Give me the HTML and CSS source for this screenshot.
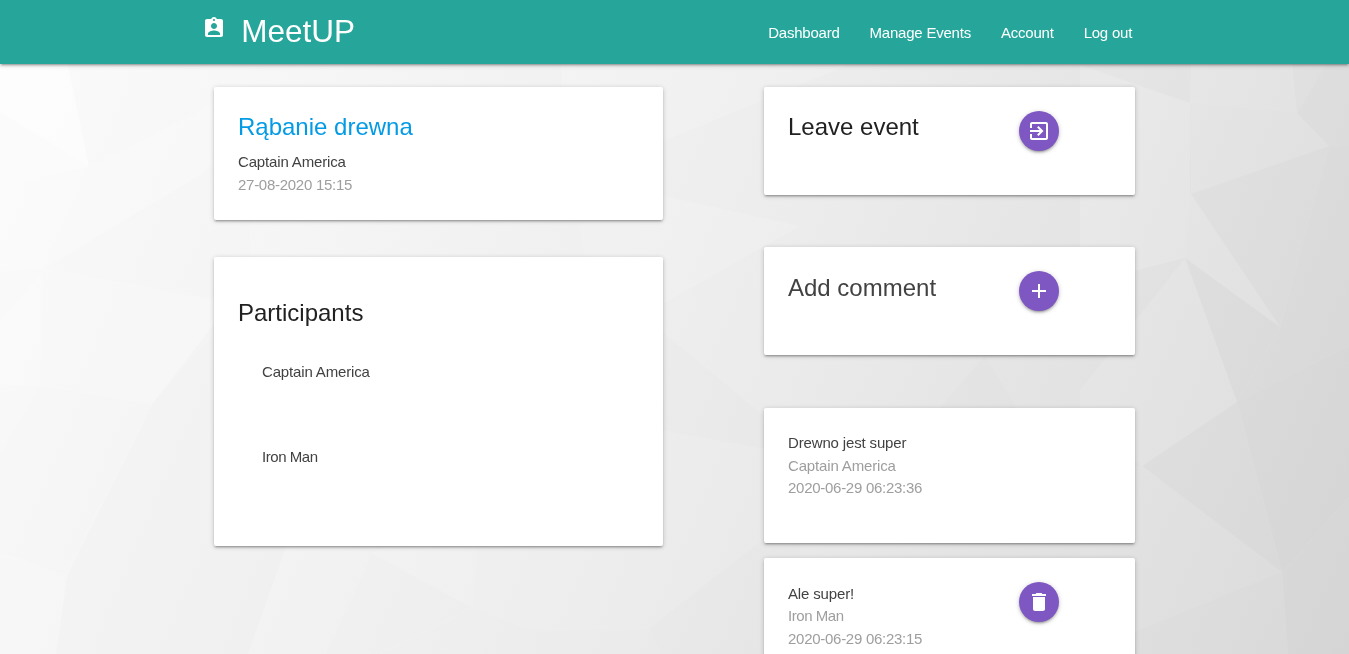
FILE: index.html
```html
<!DOCTYPE html>
<html lang="en">
<head>
<meta charset="utf-8">
<title>MeetUP</title>
<link rel="stylesheet" href="styles.css">
</head>
<body>
<svg class="backdrop" viewBox="0 0 1349 654" preserveAspectRatio="none" aria-hidden="true">
  <g fill="#fff">
    <path opacity=".5" d="M0 60H67L89 167L0 112Z"/>
    <path opacity=".3" d="M0 112L89 167L0 186Z"/>
    <path opacity=".2" d="M0 186L89 167L43 269L0 272Z"/>
    <path opacity=".14" d="M89 167L240 90L214 167L43 269Z"/>
    <path opacity=".15" d="M0 320L43 270L40 386H0Z"/>
    <path opacity=".1" d="M43 269L240 305L152 404Z"/>
    <path opacity=".1" d="M43 269L152 404L40 386Z"/>
    <path opacity=".15" d="M560 60H860L570 180Z"/>
    <path opacity=".12" d="M570 175L800 226L600 340Z"/>
    <path opacity=".15" d="M1080 65L1190 103V194L1080 180Z"/>
    <path opacity=".12" d="M1191 60H1292L1297 113L1190 103Z"/>
    <path opacity=".08" d="M1190 103L1297 113L1191 194Z"/>
    <path opacity=".08" d="M1297 113L1329 146L1191 194Z"/>
    <path opacity=".15" d="M1080 180L1191 194L1185 258L1080 285Z"/>
    <path opacity=".1" d="M1191 194L1280 327L1185 258Z"/>
    <path opacity=".1" d="M1080 390L1185 258L1237 402L1142 466L1080 430Z"/>
    <path opacity=".08" d="M1142 466L1282 572L1080 654V466Z"/>
    <path opacity=".1" d="M372 553L480 500L473 608Z"/>
  </g>
  <g fill="#000">
    <path opacity=".004" d="M43 269L200 174L250 120V306Z"/>
    <path opacity=".005" d="M40 386L152 404L65 576L0 552V452Z"/>
    <path opacity=".01" d="M152 404L240 290L310 480L248 654H56L67 575Z"/>
    <path opacity=".004" d="M372 553L473 608L380 654H325Z"/>
    <path opacity=".005" d="M473 608L535 631L650 629L690 654H380Z"/>
    <path opacity=".008" d="M649 628L800 510V654H660Z"/>
    <path opacity=".006" d="M600 280L800 445V455L600 420Z"/>
    <path opacity=".008" d="M985 355L1030 430H920Z"/>
    <path opacity=".008" d="M1191 194L1329 146L1280 327Z"/>
    <path opacity=".01" d="M1185 258L1280 327L1237 402Z"/>
    <path opacity=".012" d="M1329 146L1349 145V346L1237 402L1280 327Z"/>
    <path opacity=".006" d="M1237 402L1142 466L1282 572Z"/>
    <path opacity=".014" d="M1237 402L1349 346V497L1282 572Z"/>
    <path opacity=".01" d="M1282 572L1349 497V654H1288Z"/>
    <path opacity=".008" d="M1297 113L1326 64H1349V145L1329 146Z"/>
  </g>
</svg>

<nav class="navbar">
  <div class="container navbar-inner">
    <a class="brand">
      <svg class="brand-icon" viewBox="0 0 24 24"><path d="M19 3h-4.180C14.400 1.840 13.300 1 12 1c-1.300 0-2.400.84-2.820 2H5c-1.100 0-2 .9-2 2v14c0 1.100.9 2 2 2h14c1.100 0 2-.9 2-2V5c0-1.100-.9-2-2-2zm-7 0c.55 0 1 .45 1 1s-.45 1-1 1-1-.45-1-1 .45-1 1-1zm0 4c1.660 0 3 1.340 3 3s-1.340 3-3 3-3-1.340-3-3 1.340-3 3-3zm6 12H6v-1.400c0-2 4-3.100 6-3.100s6 1.100 6 3.100V19z"/></svg>
      <span>MeetUP</span>
    </a>
    <ul class="nav-links">
      <li>Dashboard</li>
      <li>Manage Events</li>
      <li>Account</li>
      <li>Log out</li>
    </ul>
  </div>
</nav>

<main class="container columns">
  <section class="col-left">
    <article class="card event">
      <h2 class="card-title link">Rąbanie drewna</h2>
      <p>Captain America</p>
      <p class="muted date">27-08-2020 15:15</p>
    </article>
    <article class="card participants">
      <h2 class="card-title dark">Participants</h2>
      <ul class="people">
        <li>Captain America</li>
        <li>Iron Man</li>
      </ul>
    </article>
  </section>

  <section class="col-right">
    <article class="card action">
      <h2 class="card-title dark">Leave event</h2>
      <button class="fab" aria-label="Leave event"><svg viewBox="0 0 24 24"><path d="M10.090 15.590L11.500 17l5-5-5-5-1.410 1.410L12.670 11H3v2h9.670l-2.580 2.590zM19 3H5c-1.110 0-2 .9-2 2v4h2V5h14v14H5v-4H3v4c0 1.100.89 2 2 2h14c1.100 0 2-.9 2-2V5c0-1.100-.9-2-2-2z"/></svg></button>
    </article>
    <article class="card action">
      <h2 class="card-title add">Add comment</h2>
      <button class="fab" aria-label="Add comment"><svg viewBox="0 0 24 24"><path d="M19 13h-6v6h-2v-6H5v-2h6V5h2v6h6v2z"/></svg></button>
    </article>
    <article class="card comment">
      <div>
        <p>Drewno jest super</p>
        <p class="muted">Captain America</p>
        <p class="muted date">2020-06-29 06:23:36</p>
      </div>
    </article>
    <article class="card comment">
      <div class="comment-text">
        <p>Ale super!</p>
        <p class="muted short">Iron Man</p>
        <p class="muted date">2020-06-29 06:23:15</p>
      </div>
      <button class="fab" aria-label="Delete comment"><svg viewBox="0 0 24 24"><path d="M6 19c0 1.100.9 2 2 2h8c1.100 0 2-.9 2-2V7H6v12zM19 4h-3.500l-1-1h-5l-1 1H5v2h14V4z"/></svg></button>
    </article>
  </section>
</main>
</body>
</html>
```

FILE: styles.css
```css
* { box-sizing: border-box; }

html { font-size: 15px; }

body {
  display: flex;
  flex-direction: column;
  margin: 0;
  height: 100vh;
  overflow: hidden;
  font-family: "Liberation Sans", Arial, sans-serif;
  line-height: 1.5;
  color: #424242;
  background: linear-gradient(113deg, #fbfbfb 0%, #f5f5f5 25%, #ececec 55%, #e1e1e1 80%, #d8d8d8 100%);
}

h2, p, ul { margin: 0; padding: 0; font-weight: 400; }
ul { list-style: none; }

.backdrop {
  position: fixed;
  inset: 0;
  width: 100%;
  height: 100%;
  z-index: -1;
}

.container { width: 70%; margin: 0 auto; }

.navbar {
  flex: none;
  height: 64px;
  color: #fff;
  background: #26a69a;
  box-shadow: 0 2px 2px 0 rgba(0,0,0,.14), 0 3px 1px -2px rgba(0,0,0,.12), 0 1px 5px 0 rgba(0,0,0,.2);
}

.navbar-inner { display: flex; justify-content: space-between; }

.brand {
  display: flex;
  gap: 15px;
  font-size: 2.1rem;
  line-height: 63px;
}

.brand-icon { width: 24px; height: 24px; margin-top: 16px; fill: #fff; }

.nav-links { display: flex; line-height: 66px; letter-spacing: -.22px; }
.nav-links li { padding: 0 15px; }
.nav-links li:last-child { padding-right: 14.5px; }

.columns {
  display: grid;
  grid-template-columns: 449px 371px;
  column-gap: 101px;
  flex: 1;
  min-height: 0;
  padding: 23px 0 0 11.65px;
  align-items: start;
}

.card {
  padding: 24px;
  background: #fff;
  border-radius: 2px;
  box-shadow: 0 2px 2px 0 rgba(0,0,0,.14), 0 3px 1px -2px rgba(0,0,0,.12), 0 1px 5px 0 rgba(0,0,0,.2);
}

.card p, .people li { letter-spacing: -.15px; }
.muted { color: #9e9e9e; }
.card .date { letter-spacing: -.27px; }
.card .short, .people li:last-child { letter-spacing: -.45px; }

.card-title { font-size: 24px; line-height: 32px; }
.link { color: #039be5; }
.dark { color: #212121; }
.add { padding-top: 1px; }

.event .card-title { margin-bottom: 8px; }

.participants { height: 289px; margin-top: 37px; padding-top: 40px; }
.people { display: grid; gap: 14.5px; margin-top: 8px; }
.people li { padding: 24px; }

.action, .comment {
  display: grid;
  grid-template-columns: 231px 40px;
  align-items: start;
}

.action { height: 108px; margin-bottom: 52px; }
.action + .comment { margin-top: 53px; }
.comment { height: 135px; margin-bottom: 15px; }
.comment-text { padding-top: .5px; }

.fab {
  display: grid;
  place-items: center;
  width: 40px;
  height: 40px;
  padding: 0;
  border: 0;
  border-radius: 50%;
  background: #7e57c2;
  box-shadow: 0 2px 2px 0 rgba(0,0,0,.14), 0 3px 1px -2px rgba(0,0,0,.12), 0 1px 5px 0 rgba(0,0,0,.2);
}

.fab svg { width: 24px; height: 24px; fill: #fff; }
```
